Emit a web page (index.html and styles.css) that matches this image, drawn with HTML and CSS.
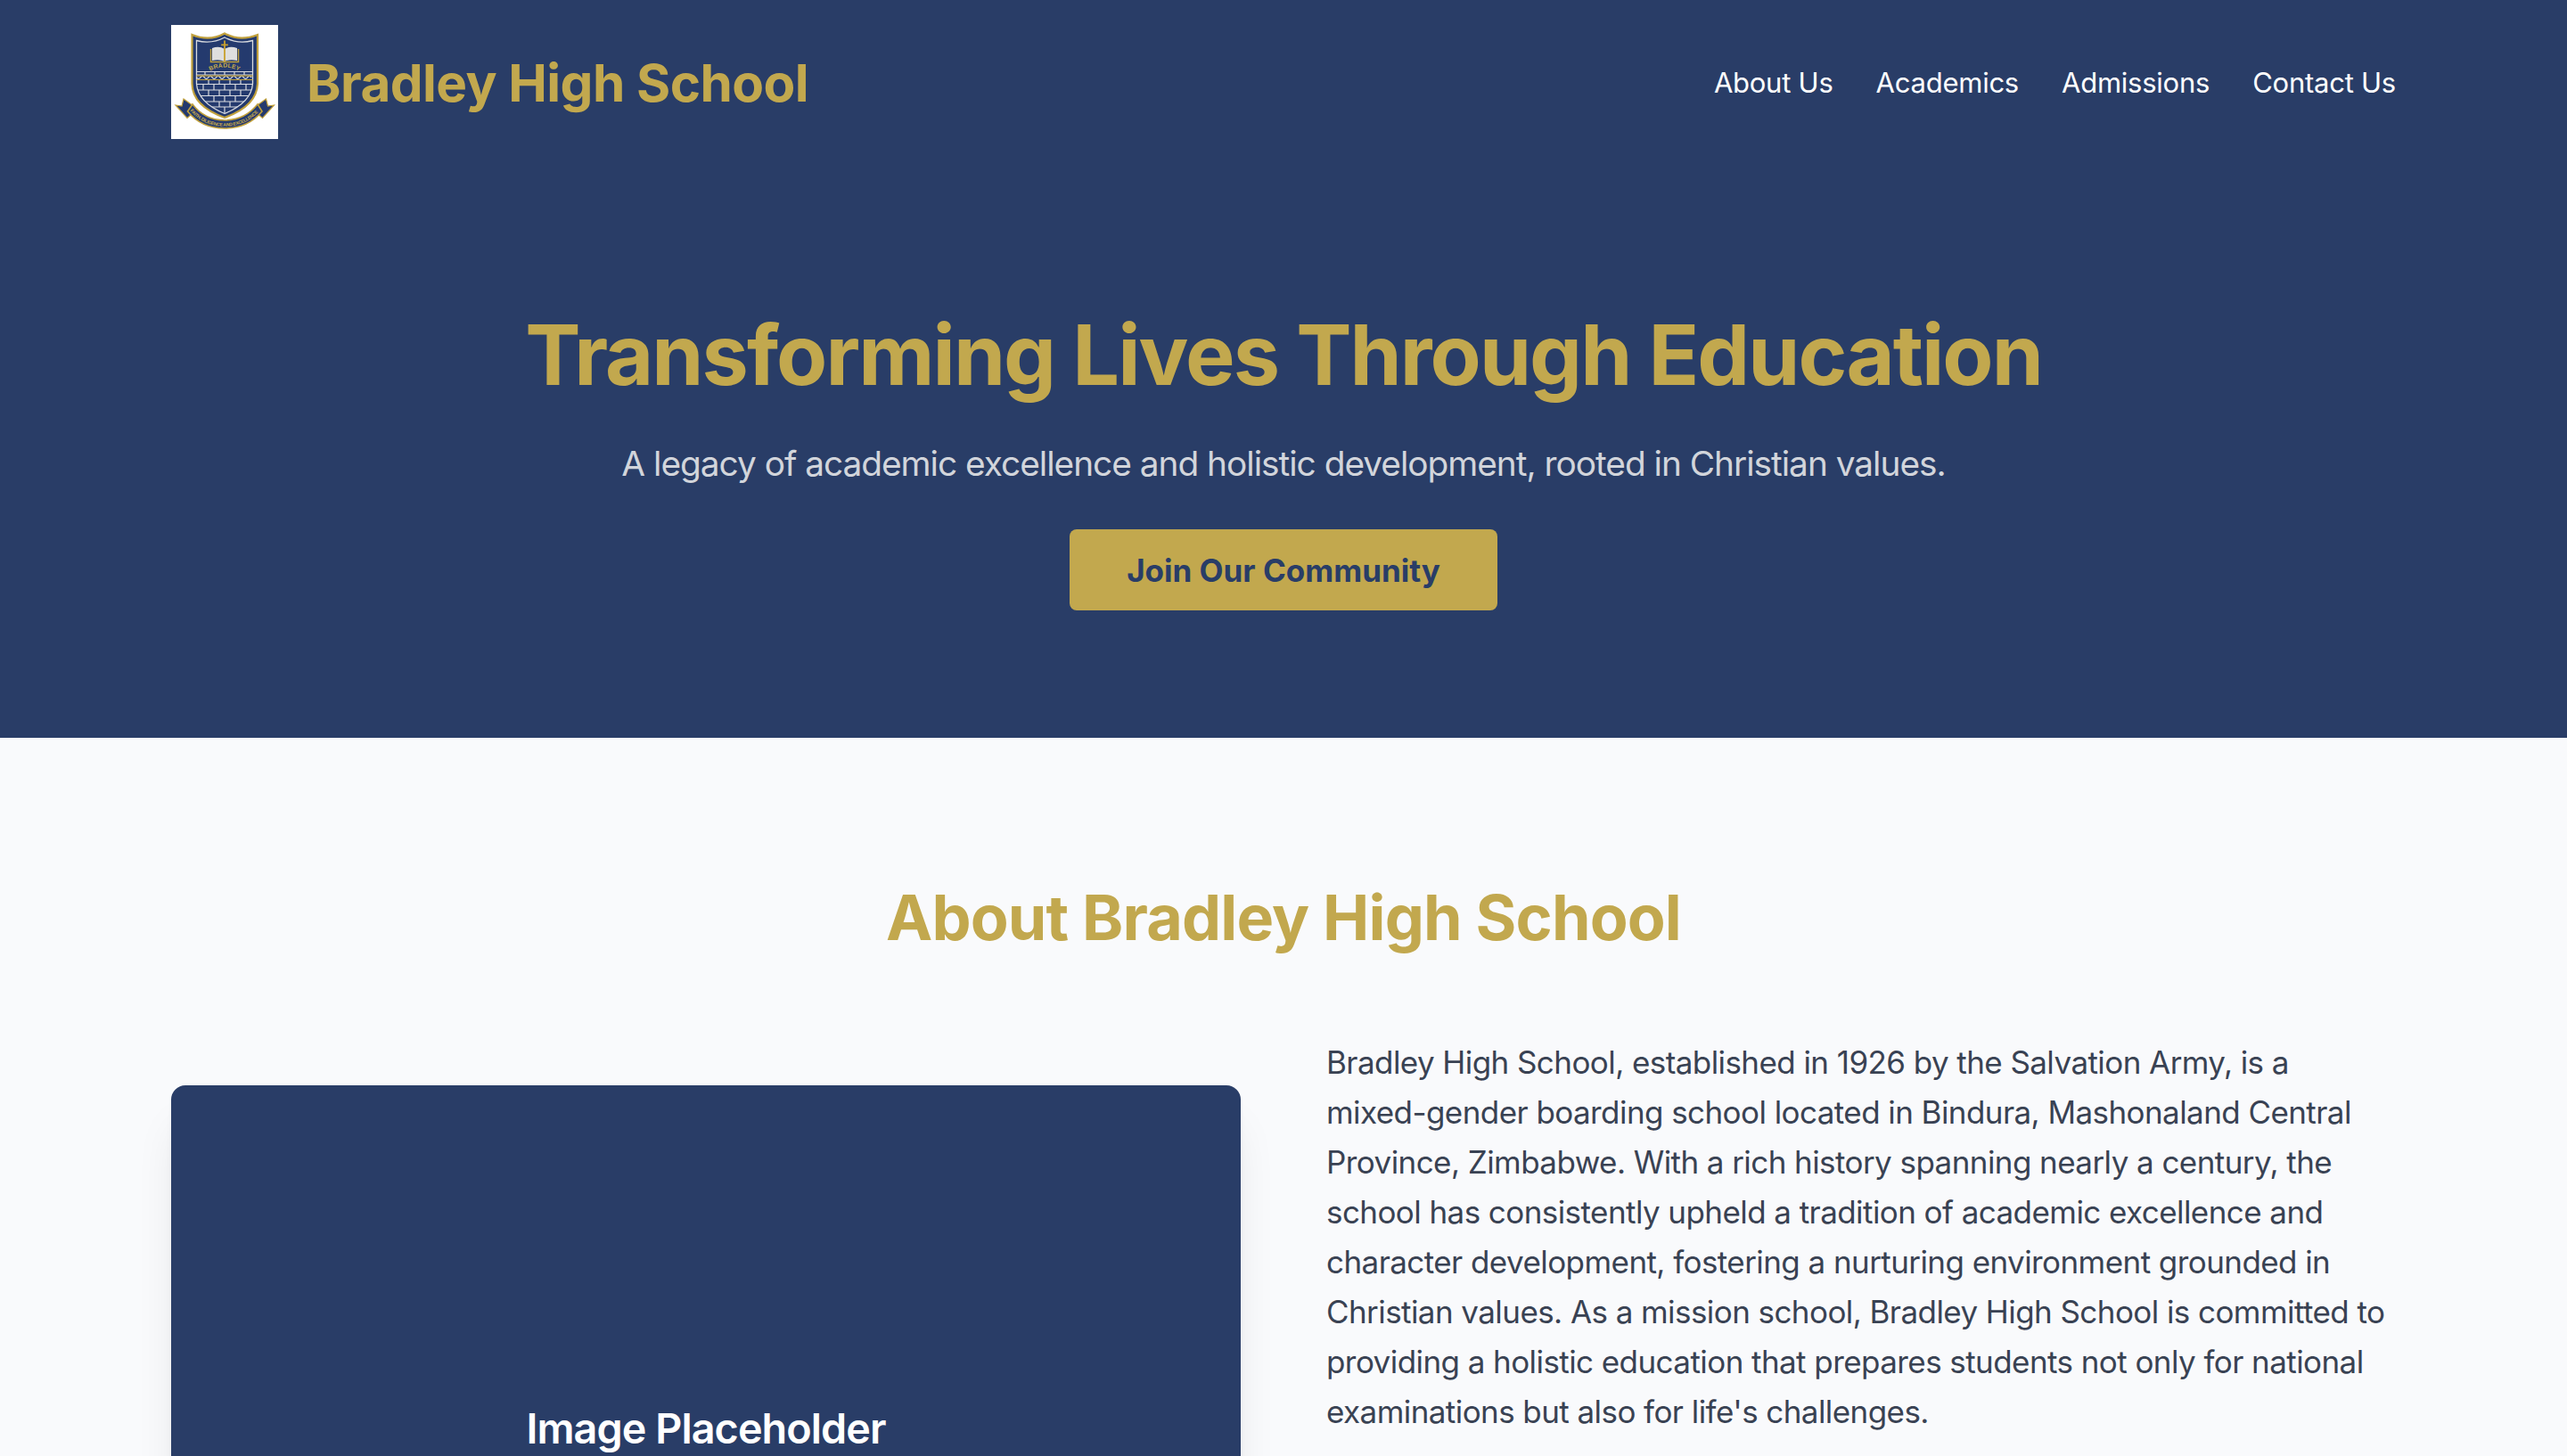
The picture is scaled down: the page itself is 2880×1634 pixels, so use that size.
FILE: index.html
```html
<!DOCTYPE html>
<html lang="en">
<head>
<meta charset="utf-8">
<title>Bradley High School</title>
<link rel="stylesheet" href="styles.css">
</head>
<body>
<header class="site-header">
  <div class="brand">
    <svg class="crest" viewBox="0 0 120 128" role="img" aria-label="Bradley High School crest">
      <rect width="120" height="128" fill="#fff"/>
      <!-- ribbon -->
      <path d="M5 90 L12 91 L14 83 L25 91 L29 95 L18 104.500 Z" fill="#243a6e" stroke="#c0a03c" stroke-width="1.200"/>
      <path d="M115.500 90 L108.500 91 L106.500 83 L95.500 91 L91.500 95 L102.500 104.500 Z" fill="#243a6e" stroke="#c0a03c" stroke-width="1.200"/>
      <path d="M24 89 Q37 106.500 60 107 Q83 106.500 97 89 L102 97 Q86 116 60 116 Q34 116 18.500 97 Z" fill="#243a6e" stroke="#c0a03c" stroke-width="1.600"/>
      <path id="motto" d="M20.500 95.500 Q36 113.800 60 113.800 Q84 113.800 99.800 95.500" fill="none"/>
      <text class="crest-motto" textLength="86"><textPath href="#motto" startOffset="1">FAITH, DILIGENCE AND EXCELLENCE</textPath></text>
      <!-- shield -->
      <path d="M23.500 11 Q43 19 60 9.500 Q77 19 97 11 L97 66 Q96 91 60 104 Q24 91 23.500 66 Z" fill="#243a6e" stroke="#c0a03c" stroke-width="2.200"/>
      <path d="M28.500 17.500 Q45 22 60 14 Q75 22 91.500 17.500 L91.500 66 Q90 87 60 99.500 Q30 87 28.500 66 Z" fill="none" stroke="#d9dbe0" stroke-width="1.300"/>
      <clipPath id="field"><path d="M28.500 17 H91.500 V66 Q90 87 60 99.500 Q30 87 28.500 66 Z"/></clipPath>
      <g clip-path="url(#field)" stroke="#d9dbe0" stroke-width="1.200" fill="none">
        <path d="M28 52.500 H92 M28 56 H92 M28 66.500 H92 M28 73 H92 M28 79.500 H92 M28 86 H92 M28 92 H92"/>
        <path d="M38 52 V56 M49 52 V56 M60 52 V56 M71 52 V56 M82 52 V56
                 M42 62 V66.500 M54 62 V66.500 M66 62 V66.500 M78 62 V66.500
                 M36 66.500 V73 M48 66.500 V73 M60 66.500 V73 M72 66.500 V73 M84 66.500 V73
                 M42 73 V79.500 M54 73 V79.500 M66 73 V79.500 M78 73 V79.500
                 M48 79.500 V86 M60 79.500 V86 M72 79.500 V86
                 M54 86 V92 M66 86 V92 M60 92 V99"/>
        <path d="M28.500 58.800 q2.200 3 4.400 0 t4.400 0 t4.400 0 t4.400 0 t4.400 0 t4.400 0 t4.400 0 t4.400 0 t4.400 0 t4.400 0 t4.400 0 t4.400 0 t4.400 0 t4.400 0"/>
        <path d="M28 57.200 H92 M28 61.500 H92" stroke="#c0a03c"/>
      </g>
      <!-- book and cross -->
      <path d="M44.500 27 V41.500 H75.500 V27" fill="none" stroke="#c0a03c" stroke-width="1.500"/>
      <path d="M46 26 Q54 23 60 27 Q66 23 74 26 V40 Q66 38 60 41 Q54 38 46 40 Z" fill="#dedede"/>
      <path d="M60 17.500 V41 M56.200 22.300 H63.800" stroke="#c8a02e" stroke-width="1.800"/>
      <path id="name" d="M43 51.900 Q60 43.300 77 51.900" fill="none"/>
      <text class="crest-name" textLength="34"><textPath href="#name" startOffset="0.500">BRADLEY</textPath></text>
    </svg>
    <span class="brand-name">Bradley High School</span>
  </div>
  <nav class="site-nav">
    <a>About Us</a>
    <a>Academics</a>
    <a>Admissions</a>
    <a>Contact Us</a>
  </nav>
</header>
<main>
  <section class="hero">
    <h1>Transforming Lives Through Education</h1>
    <p>A legacy of academic excellence and holistic development, rooted in Christian values.</p>
    <a class="button">Join Our Community</a>
  </section>
  <section class="about">
    <h2>About Bradley High School</h2>
    <div class="about-grid">
      <div class="placeholder"><span>Image Placeholder</span></div>
      <p class="about-text">Bradley High School, established in 1926 by the Salvation Army, is a<br>mixed-gender boarding school located in Bindura, Mashonaland Central<br>Province, Zimbabwe. With a rich history spanning nearly a century, the<br>school has consistently upheld a tradition of academic excellence and<br>character development, fostering a nurturing environment grounded in<br>Christian values. As a mission school, Bradley High School is committed to<br>providing a holistic education that prepares students not only for national<br>examinations but also for life's challenges.</p>
    </div>
  </section>
</main>
</body>
</html>
```
FILE: styles.css
```css
* { box-sizing: border-box; }

body {
  display: flex;
  flex-direction: column;
  margin: 0;
  height: 1634px;
  overflow: hidden;
  background: #f9fafc;
  color: #394253;
  font-family: Inter, "Liberation Sans", sans-serif;
}

h1, h2, p { margin: 0; }

.site-header {
  display: flex;
  flex: none;
  align-items: center;
  justify-content: space-between;
  height: 184px;
  padding: 0 192px;
  background: #293d67;
}

main { flex: 1; min-height: 0; overflow: hidden; }

.brand { display: flex; align-items: center; gap: 32px; }

.crest { display: block; width: 120px; height: 128px; }

.crest-motto { font: 700 5.2px "Liberation Sans", sans-serif; fill: #c8ab4c; }
.crest-name { font: 700 6.8px "Liberation Sans", sans-serif; fill: #c8ab4c; }

.brand-name {
  padding-top: 2px;
  color: #c2a84e;
  font-size: 58.4px;
  font-weight: 700;
  line-height: 72px;
  letter-spacing: -.57px;
  white-space: nowrap;
}

.site-nav {
  display: flex;
  gap: 48px;
  padding-top: 2px;
  color: #fff;
  font-size: 31px;
  line-height: 48px;
  letter-spacing: -.24px;
  white-space: nowrap;
}

.hero {
  display: flex;
  flex-direction: column;
  align-items: center;
  height: 644px;
  padding-top: 167px;
  background: #293d67;
  white-space: nowrap;
}

.hero h1 {
  color: #c2a84e;
  font-size: 93.4px;
  font-weight: 700;
  line-height: 96px;
  letter-spacing: -1.94px;
}

.hero p {
  margin-top: 45px;
  color: #d2d5db;
  font-size: 38.8px;
  line-height: 56px;
  letter-spacing: -1.01px;
}

.button {
  display: flex;
  align-items: center;
  justify-content: center;
  width: 480px;
  height: 91px;
  margin-top: 46px;
  border-radius: 8px;
  background: #c2a84e;
  color: #293d67;
  font-size: 35px;
  font-weight: 700;
}

.about { padding: 162px 192px 0; }

.about h2 {
  color: #c2a84e;
  font-size: 70px;
  font-weight: 700;
  line-height: 80px;
  letter-spacing: -.84px;
  text-align: center;
}

.about-grid {
  display: grid;
  grid-template-columns: repeat(2, minmax(0, 1fr));
  gap: 96px;
  margin-top: 94px;
}

.placeholder {
  display: flex;
  align-items: center;
  justify-content: center;
  height: 768px;
  margin-top: 54px;
  padding-top: 2px;
  border-radius: 16px;
  background: #293d67;
  box-shadow: 0 40px 50px -10px rgba(0, 0, 0, .1), 0 16px 20px -12px rgba(0, 0, 0, .1);
  color: #fff;
  font-size: 46.7px;
  font-weight: 600;
  letter-spacing: -.92px;
}

.about-text {
  font-size: 35px;
  line-height: 56px;
  letter-spacing: -.57px;
  white-space: nowrap;
}
```
